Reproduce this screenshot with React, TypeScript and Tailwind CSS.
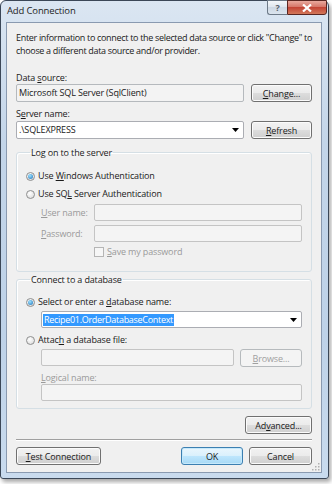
import React from "react";

const F = { fontFamily: '"Open Sans", "Noto Sans", sans-serif' };

function Btn({
  children,
  w,
  def,
  disabled,
}: {
  children: React.ReactNode;
  w: string;
  def?: boolean;
  disabled?: boolean;
}) {
  const base =
    "h-[18px] flex items-center justify-center rounded-[3px] border leading-none shrink-0";
  let cls = "";
  if (disabled) {
    cls = "border-[#b6babd] bg-[#f4f4f4] text-[#a0a0a0]";
  } else if (def) {
    cls =
      "border-[#3c7fb1] bg-[linear-gradient(#eaf6fd,#d9f0fc_50%,#bee6fd_50%,#a7d9f5)] shadow-[inset_0_0_0_1px_#c6e9fb] text-[#1a1a1a]";
  } else {
    cls =
      "border-[#707070] bg-[linear-gradient(#f2f2f2,#ebebeb_50%,#dddddd_50%,#cfcfcf)] shadow-[inset_0_0_0_1px_#fbfbfb] text-[#1a1a1a]";
  }
  return <div className={`${base} ${cls} ${w}`}>{children}</div>;
}

function Radio({ checked }: { checked?: boolean }) {
  return (
    <div className="w-[9px] h-[9px] rounded-full border border-[#8e8f8f] bg-[radial-gradient(circle_at_40%_35%,#ffffff,#d6d6d6)] flex items-center justify-center shrink-0">
      {checked && (
        <div className="w-[5px] h-[5px] rounded-full bg-[radial-gradient(circle_at_40%_35%,#9ee3ff,#1b6fb8)]" />
      )}
    </div>
  );
}

function Arrow() {
  return (
    <svg width="7" height="4" viewBox="0 0 7 4" className="shrink-0">
      <path d="M0 0 H7 L3.5 4 Z" fill="#000" />
    </svg>
  );
}

export default function App() {
  return (
    <div
      className="w-[332px] h-[484px] bg-white text-[9px] tracking-[-0.15px] text-[#1a1a1a] overflow-hidden"
      style={F}
    >
      <div className="w-[329px] h-[479px] border border-[#3b4757] rounded-t-[6px] rounded-b-[3px] bg-[linear-gradient(180deg,#dbe6f2,#c3d5e9_30%,#bed2e8_70%,#c9dbee)] shadow-[2px_3px_4px_rgba(0,0,0,0.35)] flex flex-col">
        {/* title bar */}
        <div className="h-[21px] flex items-start shrink-0">
          <div className="pl-[6px] pt-[4px] text-[9.5px] leading-[12px] text-[#1e1e1e]">
            Add Connection
          </div>
          <div className="ml-auto mr-[1px] -mt-[1px] flex">
            <div className="w-[20px] h-[15px] border border-[#6d7a88] border-r-0 rounded-bl-[3px] bg-[linear-gradient(#f4f7fa,#dde5ee_50%,#cdd8e4_50%,#dbe4ee)] flex items-center justify-center text-[9px] text-[#56606b] font-bold leading-none">
              ?
            </div>
            <div className="w-[40px] h-[15px] border border-[#5a2621] rounded-br-[3px] bg-[linear-gradient(#e9a99e,#d47163_50%,#c44536_50%,#d2785a)] flex items-center justify-center">
              <svg width="10" height="8" viewBox="0 0 10 8">
                <path
                  d="M1 0.5 L9 7.5 M9 0.5 L1 7.5"
                  stroke="#fff"
                  strokeWidth="2.2"
                />
              </svg>
            </div>
          </div>
        </div>

        {/* content panel */}
        <div className="relative ml-[5px] w-[316px] h-[451px] border border-[#8a9ab0] bg-[#f0f0f0] px-[9px] pt-[8px] flex flex-col">
          <div className="leading-[13px] whitespace-nowrap tracking-[-0.32px]">
            Enter information to connect to the selected data source or click "Change" to
            <br />
            choose a different data source and/or provider.
          </div>

          <div className="mt-[15px] leading-[11px]">
            Data <span className="underline">s</span>ource:
          </div>
          <div className="mt-[1px] flex justify-between">
            <div className="w-[228px] h-[18px] border border-[#b5b9bd] rounded-[2px] bg-[#f3f3f3] flex items-center pl-[2px]">
              Microsoft SQL Server (SqlClient)
            </div>
            <Btn w="w-[61px]">
              <span className="underline">C</span>hange...
            </Btn>
          </div>

          <div className="mt-[6px] leading-[11px]">
            S<span className="underline">e</span>rver name:
          </div>
          <div className="mt-[2px] flex justify-between">
            <div className="w-[228px] h-[18px] border border-[#abadb3] rounded-[2px] bg-white flex items-center pl-[2px] pr-[4px]">
              <span>.\SQLEXPRESS</span>
              <span className="ml-auto">
                <Arrow />
              </span>
            </div>
            <Btn w="w-[61px]">
              <span className="underline">R</span>efresh
            </Btn>
          </div>

          {/* Group 1 */}
          <fieldset className="mt-[8px] border border-[#d5dfe5] rounded-[3px] shadow-[inset_1px_1px_0_#fff] px-[9px] pb-[14px]">
            <legend className="ml-[4px] px-[1px] leading-[11px]">
              Log on to the server
            </legend>
            <div className="mt-[12px] flex items-center h-[12px]">
              <Radio checked />
              <span className="ml-[3px]">
                Use <span className="underline">W</span>indows Authentication
              </span>
            </div>
            <div className="mt-[6px] flex items-center h-[12px]">
              <Radio />
              <span className="ml-[3px]">
                Use SQ<span className="underline">L</span> Server Authentication
              </span>
            </div>
            <div className="mt-[4px] flex items-center">
              <div className="ml-[15px] w-[53px] text-[#9a9a9a]">
                <span className="underline">U</span>ser name:
              </div>
              <div className="w-[208px] h-[17px] border border-[#c4c4c4] rounded-[2px] bg-[#f4f4f4]" />
            </div>
            <div className="mt-[4px] flex items-center">
              <div className="ml-[15px] w-[53px] text-[#9a9a9a]">
                <span className="underline">P</span>assword:
              </div>
              <div className="w-[208px] h-[17px] border border-[#c4c4c4] rounded-[2px] bg-[#f4f4f4]" />
            </div>
            <div className="mt-[4px] flex items-center h-[11px] pl-[68px]">
              <div className="w-[10px] h-[10px] border border-[#b5b5b5] bg-[#f6f6f6]" />
              <span className="ml-[3px] text-[#9a9a9a]">
                <span className="underline">S</span>ave my password
              </span>
            </div>
          </fieldset>

          {/* Group 2 */}
          <fieldset className="mt-[2px] border border-[#d5dfe5] rounded-[3px] shadow-[inset_1px_1px_0_#fff] px-[9px] pb-[7px]">
            <legend className="ml-[4px] px-[1px] leading-[11px]">
              Connect to a database
            </legend>
            <div className="mt-[11px] flex items-center h-[12px]">
              <Radio checked />
              <span className="ml-[3px]">
                Select or enter a <span className="underline">d</span>atabase name:
              </span>
            </div>
            <div className="mt-[3px] ml-[15px] w-[261px] h-[17px] border border-[#abadb3] rounded-[2px] bg-white flex items-center pl-[1px] pr-[4px]">
              <span className="bg-[#3399ff] text-white px-[1px] leading-[12px] tracking-[-0.3px]">
                Recipe01.OrderDatabaseContext
              </span>
              <span className="ml-auto">
                <Arrow />
              </span>
            </div>
            <div className="mt-[6px] flex items-center h-[12px]">
              <Radio />
              <span className="ml-[3px]">
                Attac<span className="underline">h</span> a database file:
              </span>
            </div>
            <div className="mt-[3px] ml-[15px] w-[261px] flex justify-between">
              <div className="w-[193px] h-[17px] border border-[#c4c4c4] rounded-[2px] bg-[#f4f4f4]" />
              <Btn w="w-[62px]" disabled>
                <span className="underline">B</span>rowse...
              </Btn>
            </div>
            <div className="mt-[5px] ml-[15px] leading-[11px] text-[#9a9a9a]">
              <span className="underline">L</span>ogical name:
            </div>
            <div className="mt-[1px] ml-[15px] w-[261px] h-[17px] border border-[#c4c4c4] rounded-[2px] bg-[#f4f4f4]" />
          </fieldset>

          <div className="mt-[7px] flex justify-end">
            <Btn w="w-[67px]">
              Ad<span className="underline">v</span>anced...
            </Btn>
          </div>

          <div className="mt-[5px] border-t border-[#a0a0a0] border-b border-b-white" />

          <div className="mt-[6px] flex">
            <Btn w="w-[85px]">
              <span className="underline">T</span>est Connection
            </Btn>
            <div className="ml-auto flex gap-[6px]">
              <Btn w="w-[62px]" def>
                OK
              </Btn>
              <Btn w="w-[63px]">Cancel</Btn>
            </div>
          </div>

          <svg
            width="8"
            height="8"
            viewBox="0 0 8 8"
            className="absolute right-[1px] bottom-[1px]"
          >
            <rect x="6" y="0" width="1.5" height="1.5" fill="#b0b0b0" />
            <rect x="3" y="3" width="1.5" height="1.5" fill="#b0b0b0" />
            <rect x="6" y="3" width="1.5" height="1.5" fill="#b0b0b0" />
            <rect x="0" y="6" width="1.5" height="1.5" fill="#b0b0b0" />
            <rect x="3" y="6" width="1.5" height="1.5" fill="#b0b0b0" />
            <rect x="6" y="6" width="1.5" height="1.5" fill="#b0b0b0" />
          </svg>
        </div>
      </div>
    </div>
  );
}
